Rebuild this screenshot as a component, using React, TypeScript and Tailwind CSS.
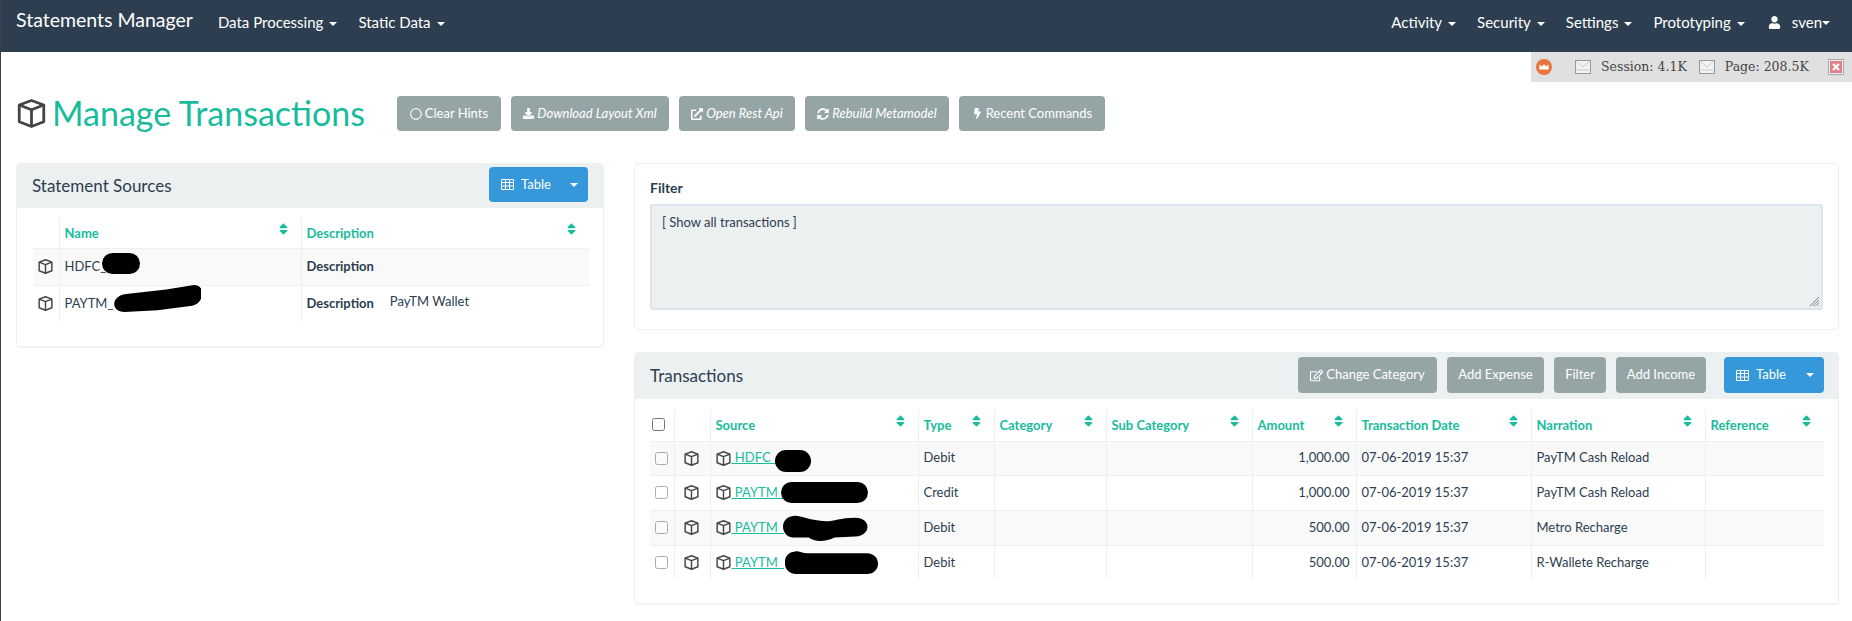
import type { ReactNode } from 'react'
import { FaBolt, FaDownload, FaExternalLinkAlt, FaRegCircle, FaRegEdit, FaSort, FaSyncAlt, FaUser } from 'react-icons/fa'

function Caret({ className = 'ml-[6px]' }: { className?: string }) {
  return <span className={`inline-block align-middle border-x-[4px] border-t-[4px] border-x-transparent border-t-current ${className}`} />
}

function CubeIcon({ className }: { className: string }) {
  return (
    <svg viewBox="0.5 0.2 15 15.6" fill="none" stroke="currentColor" strokeWidth="1.5" strokeLinejoin="round" className={className}>
      <path d="M8 1 14.6 3.4V12.4L8 15 1.4 12.4V3.4Z" />
      <path d="M1.4 3.4 8 6 14.6 3.4M8 6V15" />
    </svg>
  )
}

function NavItem({ label }: { label: string }) {
  return (
    <a href="#" className="text-[15px] text-white">
      {label}
      <Caret />
    </a>
  )
}

function ActionButton({ icon, label, italic, className }: { icon: ReactNode; label: string; italic?: boolean; className: string }) {
  return (
    <button className={`flex h-[35px] items-center justify-center gap-[3px] rounded-[4px] bg-[#95a5a6] text-[13px] text-white ${italic ? 'italic' : ''} ${className}`}>
      {icon}
      {label}
    </button>
  )
}

function TableButton({ className }: { className: string }) {
  return (
    <div className={`flex items-center rounded-[4px] bg-[#3498db] text-[13px] text-white ${className}`}>
      <svg viewBox="0 0 13 11" fill="none" stroke="currentColor" className="ml-[12px] h-[11px] w-[13px]">
        <path d="M.5.5h12v10H.5ZM.5 3.5h12M.5 7h12M4.5 .5v10M8.5 .5v10" />
      </svg>
      <span className="ml-[7px]">Table</span>
      <Caret className="ml-auto mr-[10px]" />
    </div>
  )
}

function HeaderCell({ label, top = 'pt-[4px]' }: { label: string; top?: string }) {
  return (
    <th className={`border-l border-[#ecf0f1] pb-[4px] pl-[5px] pr-[6px] text-left align-top text-[13px] font-bold text-[#18bc9c] ${top}`}>
      <div className="flex justify-between">
        <span className="pt-[2px]">{label}</span>
        <FaSort className="mr-[7px] h-[14px] w-[9px]" />
      </div>
    </th>
  )
}

function Scribble({ d, className }: { d: string; className: string }) {
  return (
    <svg viewBox="0 0 100 30" preserveAspectRatio="none" className={`absolute text-black ${className}`}>
      <path d={d} fill="currentColor" />
    </svg>
  )
}

function Blob({ className }: { className: string }) {
  return <span className={`absolute rounded-full bg-black ${className}`} />
}

const transactions = [
  { source: 'HDFC_', type: 'Debit', amount: '1,000.00', narration: 'PayTM Cash Reload', row: 'bg-[#f9f9f9]', h: 'h-[34px]', cover: <Blob className="left-[64px] top-[8px] h-[22px] w-[36px]" /> },
  { source: 'PAYTM_', type: 'Credit', amount: '1,000.00', narration: 'PayTM Cash Reload', row: '', h: 'h-[35px]', cover: <Blob className="left-[70px] top-[6px] h-[21px] w-[87px]" /> },
  {
    source: 'PAYTM_',
    type: 'Debit',
    amount: '500.00',
    narration: 'Metro Recharge',
    row: 'bg-[#f9f9f9]',
    h: 'h-[35px]',
    cover: <Scribble d="M12 1C20 0 30 6 50 7 60 7 66 3 84 3 103 3 103 23 84 24L60 25C50 30 36 30 30 25H12C-4 24-4 2 12 1Z" className="left-[72px] top-[4px] h-[27px] w-[86px]" />,
  },
  {
    source: 'PAYTM_',
    type: 'Debit',
    amount: '500.00',
    narration: 'R-Wallete Recharge',
    row: '',
    h: 'h-[34px]',
    cover: <Scribble d="M10 1C14-1 18 3 24 3H88C104 3 104 30 88 30H12C-4 30-4 2 10 1Z" className="left-[74px] top-[5px] h-[23px] w-[93px]" />,
  },
]

function Cell({ children, className = '' }: { children?: ReactNode; className?: string }) {
  return <td className={`border-l border-[#ecf0f1] pl-[5px] pr-[6px] align-middle ${className}`}>{children}</td>
}

export default function App() {
  return (
    <div className="h-[621px] overflow-hidden border-l border-[#4a3f3f] bg-white font-['Lato',sans-serif] text-[13px] text-[#2c3e50]">
      <nav className="flex h-[52px] items-center bg-[#2c3e50] pb-[7px] text-white">
        <a href="#" className="ml-[15px] pb-[6px] text-[19.5px]">Statements Manager</a>
        <div className="ml-[25px] flex gap-[21px]">
          <NavItem label="Data Processing" />
          <NavItem label="Static Data" />
        </div>
        <div className="ml-auto flex items-center gap-[21px] pr-[22px]">
          <NavItem label="Activity" />
          <NavItem label="Security" />
          <NavItem label="Settings" />
          <NavItem label="Prototyping" />
          <a href="#" className="ml-[2px] flex items-center text-[15px] text-white">
            <FaUser className="size-[13px]" />
            <span className="ml-[11px]">sven</span>
            <Caret className="ml-0" />
          </a>
        </div>
      </nav>

      <div className="flex justify-end">
        <div className="flex h-[30px] w-[321px] items-center bg-[#e0e0e0] font-['DejaVu_Serif',serif] text-[12.5px] text-[#444]">
          <svg viewBox="0 0 16 16" className="ml-[5px] size-[16px]">
            <circle cx="8" cy="8" r="8" fill="#e9743d" />
            <path d="M3.5 5.5 6 7.5 8 5l2 2.5 2.5-2v5h-9Z" fill="#fff" />
          </svg>
          <svg viewBox="0 0 16 14" className="ml-[23px] h-[14px] w-[16px]">
            <rect x="0.5" y="0.5" width="15" height="13" fill="#f2f2f2" stroke="#999" />
            <path d="M1 1 8 7l7-6M1 10h14" fill="none" stroke="#ccc" />
          </svg>
          <span className="ml-[10px]">Session: 4.1K</span>
          <svg viewBox="0 0 16 14" className="ml-[12px] h-[14px] w-[16px]">
            <rect x="0.5" y="0.5" width="15" height="13" fill="#f2f2f2" stroke="#999" />
            <path d="M1 1 8 7l7-6M1 10h14" fill="none" stroke="#ccc" />
          </svg>
          <span className="ml-[10px]">Page: 208.5K</span>
          <svg viewBox="0 0 16 16" className="ml-auto mr-[8px] size-[16px]">
            <rect x="0.5" y="0.5" width="15" height="15" fill="#eee" stroke="#aaa" />
            <rect x="2" y="2" width="12" height="12" fill="#e0808a" />
            <path d="M5 5l6 6M11 5l-6 6" stroke="#fff" strokeWidth="2" />
          </svg>
        </div>
      </div>

      <div className="ml-[16px] mt-[14px] flex h-[35px] items-center">
        <CubeIcon className="size-[29px] text-[#444]" />
        <h1 className="ml-[6px] pb-[2px] text-[34px] leading-none text-[#18bc9c]">Manage Transactions</h1>
        <div className="ml-[32px] flex gap-[10px]">
          <ActionButton className="w-[104px]" icon={<FaRegCircle className="size-[12px]" />} label="Clear Hints" />
          <ActionButton className="w-[158px]" italic icon={<FaDownload className="size-[11px]" />} label="Download Layout Xml" />
          <ActionButton className="w-[116px]" italic icon={<FaExternalLinkAlt className="size-[12px]" />} label="Open Rest Api" />
          <ActionButton className="w-[144px]" italic icon={<FaSyncAlt className="size-[12px]" />} label="Rebuild Metamodel" />
          <ActionButton className="w-[146px]" icon={<FaBolt className="size-[11px]" />} label="Recent Commands" />
        </div>
      </div>

      <div className="ml-[15px] mt-[32px] flex items-start gap-[30px]">
        <section className="h-[184px] w-[588px] rounded-[4px] border border-[#ecf0f1] shadow-[0_1px_1px_rgba(0,0,0,0.05)]">
          <div className="flex h-[44px] items-start justify-between rounded-t-[4px] bg-[#ecf0f1] pl-[15px] pr-[15px] pt-[3px]">
            <h3 className="pt-[9px] text-[17px] leading-[20px]">Statement Sources</h3>
            <TableButton className="h-[35px] w-[99px]" />
          </div>
          <table className="ml-[16px] mt-[10px] w-[556px] table-fixed border-collapse">
            <colgroup>
              <col className="w-[26px]" />
              <col className="w-[242px]" />
              <col />
            </colgroup>
            <thead>
              <tr className="h-[30px] border-b border-[#ecf0f1]">
                <th />
                <HeaderCell label="Name" />
                <HeaderCell label="Description" />
              </tr>
            </thead>
            <tbody>
              <tr className="h-[37px] border-b border-[#ecf0f1] bg-[#f9f9f9]">
                <td><CubeIcon className="ml-[5px] size-[15px] text-[#444]" /></td>
                <Cell className="relative">
                  HDFC_
                  <Blob className="left-[42px] top-[4px] h-[21px] w-[38px]" />
                </Cell>
                <Cell className="font-bold">Description</Cell>
              </tr>
              <tr className="h-[37px]">
                <td><CubeIcon className="ml-[5px] size-[15px] text-[#444]" /></td>
                <Cell className="relative">
                  PAYTM_
                  <Scribble d="M14 10 60 5 92 0C106 0 104 20 90 23L50 28 12 30C-4 30-4 12 14 10Z" className="left-[54px] top-[-1px] h-[27px] w-[87px]" />
                </Cell>
                <Cell>
                  <span className="font-bold">Description</span>
                  <span className="relative top-[-2px] ml-[16px]">PayTM Wallet</span>
                </Cell>
              </tr>
            </tbody>
          </table>
        </section>

        <div className="flex w-[1205px] flex-col gap-[22px]">
          <section className="h-[167px] rounded-[4px] border border-[#ecf0f1] px-[15px] pt-[14px]">
            <label className="block text-[14px] font-bold leading-[20px]">Filter</label>
            <div className="relative mt-[6px] h-[106px] w-[1173px] rounded-[3px] border-2 border-[#dce4ec] bg-[#ecf0f1] px-[10px] py-[7px] text-[13px]">
              [ Show all transactions ]
              <svg viewBox="0 0 12 12" className="absolute bottom-[1px] right-[1px] size-[11px] text-[#777]">
                <path d="M11 1 1 11M11 4 4 11M11 7 7 11M11 10 10 11" stroke="currentColor" fill="none" />
              </svg>
            </div>
          </section>

          <section className="h-[252px] rounded-[4px] border border-[#ecf0f1] shadow-[0_1px_1px_rgba(0,0,0,0.05)]">
            <div className="flex h-[46px] items-start justify-between rounded-t-[4px] bg-[#ecf0f1] pl-[15px] pr-[14px] pt-[4px]">
              <h3 className="pt-[9px] text-[17px] leading-[20px]">Transactions</h3>
              <div className="flex gap-[10px]">
                <ActionButton className="!h-[36px] w-[139px]" icon={<FaRegEdit className="size-[13px]" />} label="Change Category" />
                <ActionButton className="!h-[36px] w-[97px]" icon={null} label="Add Expense" />
                <ActionButton className="!h-[36px] w-[52px]" icon={null} label="Filter" />
                <ActionButton className="!h-[36px] w-[90px]" icon={null} label="Add Income" />
                <TableButton className="ml-[8px] h-[36px] w-[100px]" />
              </div>
            </div>
            <table className="ml-[15px] mt-[10px] w-[1174px] table-fixed border-collapse">
              <colgroup>
                <col className="w-[24px]" />
                <col className="w-[36px]" />
                <col className="w-[208px]" />
                <col className="w-[76px]" />
                <col className="w-[112px]" />
                <col className="w-[146px]" />
                <col className="w-[104px]" />
                <col className="w-[175px]" />
                <col className="w-[174px]" />
                <col />
              </colgroup>
              <thead>
                <tr className="h-[32px] border-b border-[#ecf0f1]">
                  <th className="pl-[2px] text-left align-middle"><input type="checkbox" className="block" /></th>
                  <th className="border-l border-[#ecf0f1]" />
                  <HeaderCell top="pt-[5px]" label="Source" />
                  <HeaderCell top="pt-[5px]" label="Type" />
                  <HeaderCell top="pt-[5px]" label="Category" />
                  <HeaderCell top="pt-[5px]" label="Sub Category" />
                  <HeaderCell top="pt-[5px]" label="Amount" />
                  <HeaderCell top="pt-[5px]" label="Transaction Date" />
                  <HeaderCell top="pt-[5px]" label="Narration" />
                  <HeaderCell top="pt-[5px]" label="Reference" />
                </tr>
              </thead>
              <tbody>
                {transactions.map((t, i) => (
                  <tr key={i} className={`border-b border-[#ecf0f1] last:border-b-0 ${t.row} ${t.h}`}>
                    <td className="pl-[5px]"><input type="checkbox" className="block opacity-60" /></td>
                    <td className="border-l border-[#ecf0f1]"><CubeIcon className="ml-[9px] size-[15px] text-[#444]" /></td>
                    <Cell className="relative">
                      <a href="#" className="flex items-center text-[#18bc9c]">
                        <CubeIcon className="size-[15px] text-[#444]" />
                        <span className="ml-[1px] underline">{'\u00a0'}{t.source}</span>
                      </a>
                      {t.cover}
                    </Cell>
                    <Cell>{t.type}</Cell>
                    <Cell />
                    <Cell />
                    <Cell className="text-right">{t.amount}</Cell>
                    <Cell>07-06-2019 15:37</Cell>
                    <Cell>{t.narration}</Cell>
                    <Cell />
                  </tr>
                ))}
              </tbody>
            </table>
          </section>
        </div>
      </div>
    </div>
  )
}
